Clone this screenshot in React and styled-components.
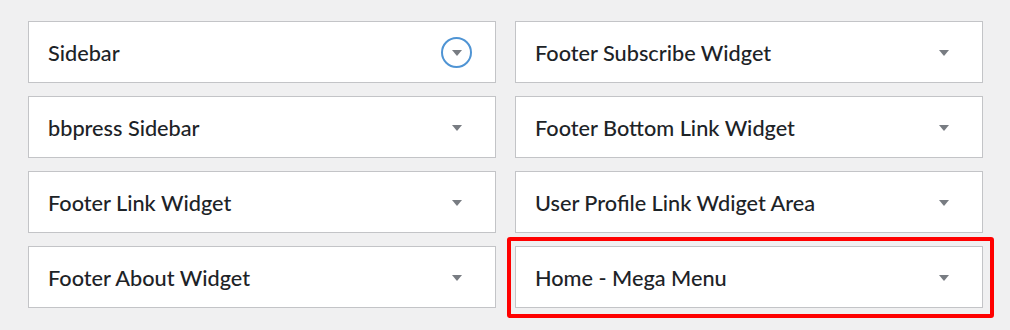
import React from "react";
import styled, { createGlobalStyle } from "styled-components";

const GlobalStyle = createGlobalStyle`
    body {
        margin: 0;
        background: #f0f0f1;
        font-family: "Lato", "Open Sans", sans-serif;
    }
`;

const Page = styled.div`
    width: 1010px;
    height: 330px;
    padding: 21px 0 0 28px;
    box-sizing: border-box;
`;

const Grid = styled.div`
    display: grid;
    grid-template-columns: 468px 468px;
    column-gap: 19px;
    row-gap: 13px;
`;

const Card = styled.div`
    position: relative;
    height: 62px;
    box-sizing: border-box;
    background: #fff;
    border: 1px solid #c3c4c7;
    display: flex;
    align-items: center;
    justify-content: space-between;
    padding: 0 23px 0 19px;
`;

const Title = styled.h2`
    margin: 2px 0 0;
    font-size: 21.7px;
    font-weight: 500;
    color: #1d2327;
`;

const Toggle = styled.button`
    width: 31px;
    height: 31px;
    padding: 0;
    border-radius: 50%;
    background: transparent;
    border: 2px solid ${({ focused }) => (focused ? "#4f94d4" : "transparent")};
    box-sizing: border-box;
    display: flex;
    align-items: center;
    justify-content: center;
    &::after {
        content: "";
        border-left: 5px solid transparent;
        border-right: 5px solid transparent;
        border-top: 6px solid #787c82;
        margin-top: 1px;
    }
`;

const Highlight = styled.div`
    position: absolute;
    top: -10px;
    left: -9px;
    right: -12px;
    bottom: -11px;
    border: 4px solid #ff0000;
    border-radius: 3px;
    pointer-events: none;
`;

const areas = [
    { title: "Sidebar", focused: true },
    { title: "Footer Subscribe Widget" },
    { title: "bbpress Sidebar" },
    { title: "Footer Bottom Link Widget" },
    { title: "Footer Link Widget" },
    { title: "User Profile Link Wdiget Area" },
    { title: "Footer About Widget" },
    { title: "Home - Mega Menu", marked: true },
];

const App = () => {
    return (
        <Page>
            <GlobalStyle />
            <Grid>
                {areas.map((a) => (
                    <Card key={a.title}>
                        <Title>{a.title}</Title>
                        <Toggle focused={a.focused} />
                        {a.marked && <Highlight />}
                    </Card>
                ))}
            </Grid>
        </Page>
    );
};

export default App;
